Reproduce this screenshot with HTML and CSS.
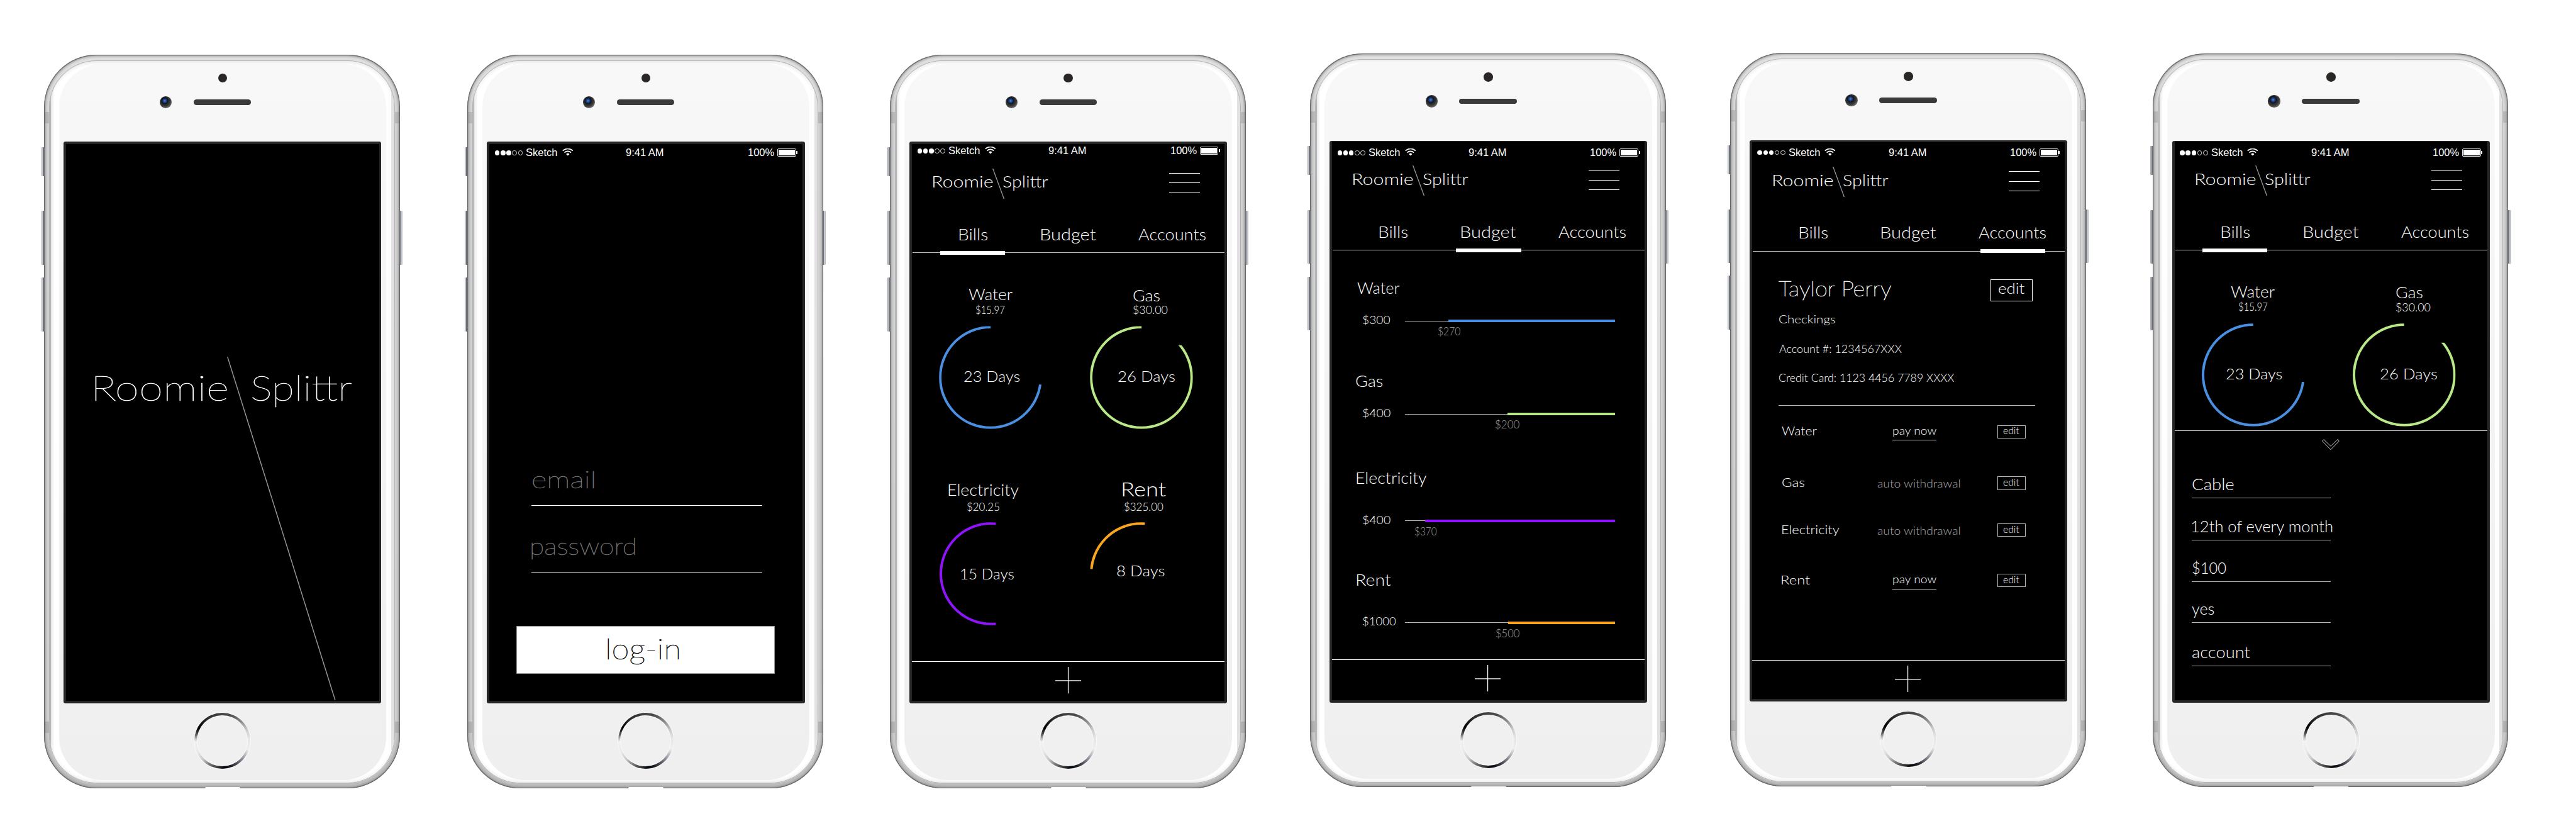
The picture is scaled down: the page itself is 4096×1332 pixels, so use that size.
FILE: index.html
```
<!DOCTYPE html>
<html lang="en">
<head>
<meta charset="utf-8">
<title>Roomie Splittr</title>
<link rel="stylesheet" href="styles.css">
</head>
<body>
<svg class="defs" width="0" height="0" aria-hidden="true">
  <symbol id="wifi" viewBox="0 0 26.6 17.3">
    <path d="M1.2 5.6a17.4 17.4 0 0 1 24.2 0M5.4 9.9a11.4 11.4 0 0 1 15.8 0" fill="none" stroke="#fff" stroke-width="2.7"/>
    <path d="M13.3 17.3L9.3 13.4a5.7 5.7 0 0 1 8 0z" fill="#fff"/>
  </symbol>
  <symbol id="slash" viewBox="0 0 29.5 73"><path d="M1 0L28 73" stroke="#979797" stroke-width="2"/></symbol>
  <symbol id="plus" viewBox="0 0 62 64"><path d="M0 33h62M31 0v64" stroke="#fff" stroke-width="2"/></symbol>
  <symbol id="ring" viewBox="0 0 247 247"><circle cx="123.5" cy="123.5" r="120.5" fill="none" stroke="currentColor" stroke-width="6"/></symbol>
</svg>
<main class="gallery">

  <section class="phone p1">
    <i class="key mute"></i><i class="key up"></i><i class="key down"></i><i class="key power"></i>
    <i class="band tl"></i><i class="band tr"></i><i class="band bl"></i><i class="band br"></i><i class="port"></i>
    <div class="glass"><div class="face">
      <div class="sensor"></div>
      <div class="ear"><div class="camera"></div><div class="speaker"></div></div>
      <div class="screen"><div class="view splash">
        <span class="t big-roomie">Roomie</span><span class="t big-splittr">Splittr</span>
        <svg class="big-slash" viewBox="0 0 262 824"><path d="M1 0L259.5 824" stroke="#979797" stroke-width="2.2"/></svg>
      </div></div>
      <div class="home"><div class="home-pad"></div></div>
    </div></div>
  </section>

  <section class="phone p2">
    <i class="key mute"></i><i class="key up"></i><i class="key down"></i><i class="key power"></i>
    <i class="band tl"></i><i class="band tr"></i><i class="band bl"></i><i class="band br"></i><i class="port"></i>
    <div class="glass"><div class="face">
      <div class="sensor"></div>
      <div class="ear"><div class="camera"></div><div class="speaker"></div></div>
      <div class="screen"><div class="view login">
        <div class="status"><span class="dots"><i></i><i></i><i></i><i class="o"></i><i class="o"></i></span><span class="carrier">Sketch</span><svg class="wifi"><use href="#wifi"/></svg><span class="clock">9:41 AM</span><span class="pct">100%</span><span class="battery"></span><i class="nub"></i></div>
        <div class="login-field email"><span class="t">email</span></div>
        <div class="login-field password"><span class="t">password</span></div>
        <div class="login-button"><span class="t">log-in</span></div>
      </div></div>
      <div class="home"><div class="home-pad"></div></div>
    </div></div>
  </section>

  <section class="phone p3">
    <i class="key mute"></i><i class="key up"></i><i class="key down"></i><i class="key power"></i>
    <i class="band tl"></i><i class="band tr"></i><i class="band bl"></i><i class="band br"></i><i class="port"></i>
    <div class="glass"><div class="face">
      <div class="sensor"></div>
      <div class="ear"><div class="camera"></div><div class="speaker"></div></div>
      <div class="screen"><div class="view">
        <div class="status"><span class="dots"><i></i><i></i><i></i><i class="o"></i><i class="o"></i></span><span class="carrier">Sketch</span><svg class="wifi"><use href="#wifi"/></svg><span class="clock">9:41 AM</span><span class="pct">100%</span><span class="battery"></span><i class="nub"></i></div>
        <header class="brand"><span class="t roomie">Roomie</span><svg class="slash"><use href="#slash"/></svg><span class="t splittr">Splittr</span><span class="menu"><i></i><i></i><i></i></span></header>
        <nav class="tabs"><a class="tab bills on"><span class="t">Bills</span></a><a class="tab budget"><span class="t">Budget</span></a><a class="tab accounts"><span class="t">Accounts</span></a></nav>
        <div class="cards">
          <div class="card water"><span class="t name">Water</span><span class="t cost">$15.97</span><div class="dial"><svg><use href="#ring"/></svg><span class="t days">23 Days</span></div></div>
          <div class="card gas"><span class="t name">Gas</span><span class="t cost">$30.00</span><div class="dial"><svg><use href="#ring"/></svg><span class="t days">26 Days</span></div></div>
          <div class="card electricity"><span class="t name">Electricity</span><span class="t cost">$20.25</span><div class="dial"><svg><use href="#ring"/></svg><span class="t days">15 Days</span></div></div>
          <div class="card rent"><span class="t name">Rent</span><span class="t cost">$325.00</span><div class="dial"><svg><use href="#ring"/></svg><span class="t days">8 Days</span></div></div>
        </div>
        <footer class="add"><svg><use href="#plus"/></svg></footer>
      </div></div>
      <div class="home"><div class="home-pad"></div></div>
    </div></div>
  </section>

  <section class="phone p4">
    <i class="key mute"></i><i class="key up"></i><i class="key down"></i><i class="key power"></i>
    <i class="band tl"></i><i class="band tr"></i><i class="band bl"></i><i class="band br"></i><i class="port"></i>
    <div class="glass"><div class="face">
      <div class="sensor"></div>
      <div class="ear"><div class="camera"></div><div class="speaker"></div></div>
      <div class="screen"><div class="view">
        <div class="status"><span class="dots"><i></i><i></i><i></i><i class="o"></i><i class="o"></i></span><span class="carrier">Sketch</span><svg class="wifi"><use href="#wifi"/></svg><span class="clock">9:41 AM</span><span class="pct">100%</span><span class="battery"></span><i class="nub"></i></div>
        <header class="brand"><span class="t roomie">Roomie</span><svg class="slash"><use href="#slash"/></svg><span class="t splittr">Splittr</span><span class="menu"><i></i><i></i><i></i></span></header>
        <nav class="tabs"><a class="tab bills"><span class="t">Bills</span></a><a class="tab budget on"><span class="t">Budget</span></a><a class="tab accounts"><span class="t">Accounts</span></a></nav>
        <div class="plan water"><span class="t name">Water</span><div class="line"><span class="t limit">$300</span><div class="track"><div class="left" style="width:79.5%"></div></div></div><span class="t used">$270</span></div>
        <div class="plan gas"><span class="t name">Gas</span><div class="line"><span class="t limit">$400</span><div class="track"><div class="left" style="width:51.3%"></div></div></div><span class="t used">$200</span></div>
        <div class="plan electricity"><span class="t name">Electricity</span><div class="line"><span class="t limit">$400</span><div class="track"><div class="left" style="width:90.6%"></div></div></div><span class="t used">$370</span></div>
        <div class="plan rent"><span class="t name">Rent</span><div class="line"><span class="t limit">$1000</span><div class="track"><div class="left" style="width:51%"></div></div></div><span class="t used">$500</span></div>
        <footer class="add"><svg><use href="#plus"/></svg></footer>
      </div></div>
      <div class="home"><div class="home-pad"></div></div>
    </div></div>
  </section>

  <section class="phone p5">
    <i class="key mute"></i><i class="key up"></i><i class="key down"></i><i class="key power"></i>
    <i class="band tl"></i><i class="band tr"></i><i class="band bl"></i><i class="band br"></i><i class="port"></i>
    <div class="glass"><div class="face">
      <div class="sensor"></div>
      <div class="ear"><div class="camera"></div><div class="speaker"></div></div>
      <div class="screen"><div class="view">
        <div class="status"><span class="dots"><i></i><i></i><i></i><i class="o"></i><i class="o"></i></span><span class="carrier">Sketch</span><svg class="wifi"><use href="#wifi"/></svg><span class="clock">9:41 AM</span><span class="pct">100%</span><span class="battery"></span><i class="nub"></i></div>
        <header class="brand"><span class="t roomie">Roomie</span><svg class="slash"><use href="#slash"/></svg><span class="t splittr">Splittr</span><span class="menu"><i></i><i></i><i></i></span></header>
        <nav class="tabs"><a class="tab bills"><span class="t">Bills</span></a><a class="tab budget"><span class="t">Budget</span></a><a class="tab accounts on"><span class="t">Accounts</span></a></nav>
        <div class="profile">
          <div class="owner"><span class="t owner-name">Taylor Perry</span><div class="edit-main"><span class="t">edit</span></div></div>
          <span class="t detail kind">Checkings</span>
          <span class="t detail number">Account #: 1234567XXX</span>
          <span class="t detail credit">Credit Card: 1123 4456 7789 XXXX</span>
        </div>
        <div class="pay water"><span class="t label">Water</span><span class="t now">pay now</span><div class="edit"><span class="t">edit</span></div></div>
        <div class="pay gas"><span class="t label">Gas</span><span class="t auto">auto withdrawal</span><div class="edit"><span class="t">edit</span></div></div>
        <div class="pay electricity"><span class="t label">Electricity</span><span class="t auto">auto withdrawal</span><div class="edit"><span class="t">edit</span></div></div>
        <div class="pay rent"><span class="t label">Rent</span><span class="t now">pay now</span><div class="edit"><span class="t">edit</span></div></div>
        <footer class="add"><svg><use href="#plus"/></svg></footer>
      </div></div>
      <div class="home"><div class="home-pad"></div></div>
    </div></div>
  </section>

  <section class="phone p6">
    <i class="key mute"></i><i class="key up"></i><i class="key down"></i><i class="key power"></i>
    <i class="band tl"></i><i class="band tr"></i><i class="band bl"></i><i class="band br"></i><i class="port"></i>
    <div class="glass"><div class="face">
      <div class="sensor"></div>
      <div class="ear"><div class="camera"></div><div class="speaker"></div></div>
      <div class="screen"><div class="view">
        <div class="status"><span class="dots"><i></i><i></i><i></i><i class="o"></i><i class="o"></i></span><span class="carrier">Sketch</span><svg class="wifi"><use href="#wifi"/></svg><span class="clock">9:41 AM</span><span class="pct">100%</span><span class="battery"></span><i class="nub"></i></div>
        <header class="brand"><span class="t roomie">Roomie</span><svg class="slash"><use href="#slash"/></svg><span class="t splittr">Splittr</span><span class="menu"><i></i><i></i><i></i></span></header>
        <nav class="tabs"><a class="tab bills on"><span class="t">Bills</span></a><a class="tab budget"><span class="t">Budget</span></a><a class="tab accounts"><span class="t">Accounts</span></a></nav>
        <div class="cards">
          <div class="card water"><span class="t name">Water</span><span class="t cost">$15.97</span><div class="dial"><svg><use href="#ring"/></svg><span class="t days">23 Days</span></div></div>
          <div class="card gas"><span class="t name">Gas</span><span class="t cost">$30.00</span><div class="dial"><svg><use href="#ring"/></svg><span class="t days">26 Days</span></div></div>
        </div>
        <div class="sheet">
          <svg class="chevron" viewBox="0 0 42 26"><path d="M4.4 .8L21 17 37.6 .8 41.2 4.6 21 25.2 .8 4.6z" fill="none" stroke="#fff" stroke-width="1.2"/></svg>
          <div class="entry f-name"><span class="t">Cable</span></div>
          <div class="entry f-date"><span class="t">12th of every month</span></div>
          <div class="entry f-cost"><span class="t">$100</span></div>
          <div class="entry f-auto"><span class="t">yes</span></div>
          <div class="entry f-from"><span class="t">account</span></div>
        </div>
      </div></div>
      <div class="home"><div class="home-pad"></div></div>
    </div></div>
  </section>

</main>
</body>
</html>
```
FILE: styles.css
```
/* 1rem is 100 design pixels */
html { font-size: 66.32px; }
* { box-sizing: border-box; }
body { margin: 0; background: #fff; font-family: Lato, "Open Sans", sans-serif; font-weight: 300; overflow: hidden; }
i { font-style: normal; display: block; }
svg { display: block; flex: none; }
.defs { position: absolute; }

.gallery { display: flex; align-items: flex-start; height: 1332px; padding-left: 1.06rem; }

/* light, wide text */
.t {
  display: block; flex: none; width: max-content; white-space: nowrap;
  line-height: 1.2; color: #fff;
  transform: scaleX(var(--k, 1)); transform-origin: 0 0;
}

/* display sizes use the hairline cut, slightly thickened */
.splash .t, .login .t, .owner-name { font-weight: 100; -webkit-text-stroke: .6px currentColor; }

/* device */
.phone {
  position: relative; flex: none; display: flex;
  width: 8.53rem; height: 17.583rem; margin-top: 1.307rem;
  padding: .14rem .12rem .11rem; border-radius: 1.26rem;
  background: linear-gradient(#e2e2e2, #d2d2d2 10%, #cfcfcf 90%, #bdbdbd);
  box-shadow: inset 0 0 1px 1px #5f5f5f, inset 0 0 4px 2px #8d8d8d;
}
.p2 { margin-left: 1.62rem; }
.p3 { margin-left: 1.6rem; }
.p4 { margin-left: 1.54rem; margin-top: 1.284rem; }
.p5 { margin-left: 1.54rem; margin-top: 1.265rem; }
.p6 { margin-left: 1.6rem; margin-top: 1.284rem; }
.glass {
  flex: 1; display: flex; padding: .09rem .21rem .09rem .23rem; border-radius: 1.13rem;
  background: linear-gradient(90deg, #abacaf 0, #abacaf .04rem, #eeeff0 .055rem, #f6f6f7 .1rem, #fff .12rem, #fff calc(100% - .09rem), #e2e2e2 calc(100% - .085rem), #e0e0e0);
  box-shadow: inset 0 0 0 1px #b4b4b6, inset 0 5px 6px -2px #e4e4e4, inset 0 -5px 5px -1px #efefef;
}
.face {
  flex: 1; display: flex; flex-direction: column; align-items: center;
  border-radius: 1.03rem; background: linear-gradient(#f8f8f8, #f3f3f3 50%, #efefef);
}
.key { position: absolute; width: .07rem; height: 1.29rem; left: -.06rem; border-radius: .02rem 0 0 .02rem; background: linear-gradient(90deg, #8d9098, #c9ccd5 25%, #c9ccd5 45%, #6f7179 50%); }
.mute { top: 2.22rem; height: .69rem; }
.up { top: 3.75rem; }
.down { top: 5.346rem; }
.power { top: 3.75rem; left: auto; right: -.06rem; transform: scaleX(-1); }
.band { position: absolute; width: .11rem; height: .27rem; background: rgba(120, 120, 120, .28); }
.tl, .bl { left: .01rem; }
.tr, .br { right: .01rem; }
.tl, .tr { top: 1.38rem; }
.bl, .br { bottom: 1.32rem; }
.port { position: absolute; left: 3.86rem; bottom: 0; width: .84rem; height: .02rem; background: #fff; border-radius: .4rem .4rem 0 0; }
.sensor { width: .22rem; height: .22rem; margin-top: .223rem; border-radius: 50%; background: #2b2626; flex: none; }
.ear { display: flex; align-items: center; align-self: flex-start; height: .29rem; margin: .327rem 0 0 2.418rem; }
.camera { width: .29rem; height: .29rem; border-radius: 50%; background: radial-gradient(circle at 42% 38%, #4d8fd8 0, #1f4688 14%, #14264f 25%, #0c1020 30%, #2c2c2c 38%, #333 50%, #777 78%); }
.speaker { width: 1.38rem; height: .13rem; margin-left: .522rem; border-radius: .065rem; background: #3a3a3a; }
.screen { width: 7.62rem; height: 13.46rem; margin-top: .803rem; flex: none; display: flex; padding: .05rem .06rem .06rem; border-radius: .05rem; background: #262626; }
.p4 .screen, .p6 .screen { padding-top: .01rem; padding-bottom: .05rem; }
.home {
  width: 1.34rem; height: 1.34rem; margin-top: .23rem; padding: .075rem; border-radius: 50%; flex: none;
  background: conic-gradient(#454545 0, #4c4c4c 18deg, #858585 42deg, #c9ccca 66deg, #e3e7e5 85deg, #eeeef1 108deg, #a3a1ab 128deg, #4d4c58 148deg, #1a1b22 163deg, #00060a 175deg, #2c2c2c 186deg, #757575 208deg, #c8c9c9 226deg, #e8ebea 245deg, #f0f3f2 268deg, #c4c5c5 274deg, #555 284deg, #000 298deg, #101010 308deg, #2c2c2c 325deg, #454545);
  box-shadow: 0 0 0 1px #f8f8f8;
}
.home-pad { height: 100%; border-radius: 50%; background: #f0f0f0; box-shadow: 0 0 0 1px #f8f8f8; }
.view { position: relative; flex: 1; display: flex; flex-direction: column; background: #000; overflow: hidden; }

/* splash */
.splash { flex-direction: row; align-items: flex-start; padding: 5.32rem 0 0 .585rem; font-size: .85rem; }
.big-roomie { --k: 1.229; width: 2.754rem; }
.big-splittr { --k: 1.169; margin-left: 1.079rem; }
.big-slash { position: absolute; left: 3.863rem; top: 5.095rem; width: 2.62rem; height: 8.24rem; }

/* status bar */
.status { display: flex; align-items: flex-start; flex: none; height: .5rem; padding: .07rem 0 0 .13rem; font: 400 .24rem/.214rem "Liberation Sans", Arial, sans-serif; color: #fff; white-space: nowrap; }
.p2 .status { padding-top: .116rem; }
.p4 .status, .p6 .status { padding-top: .18rem; }
.p5 .status { padding-top: .156rem; }
.dots { display: flex; gap: .025rem; padding-top: .04rem; }
.dots i { width: .114rem; height: .114rem; border-radius: 50%; background: #fff; }
.dots .o { background: none; border: 1px solid #ddd; }
.carrier, .clock, .pct { flex: none; transform: scaleX(1.038); transform-origin: 0 0; }
.carrier { width: .734rem; margin-left: .077rem; }
.wifi { width: .266rem; height: .173rem; margin-left: .136rem; }
.clock { width: .894rem; margin-left: 1.264rem; }
.pct { width: .614rem; margin-left: 2.021rem; }
.battery { width: .45rem; height: .19rem; margin-left: .094rem; border: 1px solid #e0e0e0; border-radius: 2px; padding: 1px; background: #fff content-box; }
.nub { width: .03rem; height: .08rem; margin: .055rem 0 0 .007rem; background: #fff; }

/* login */
.login-field { width: 5.534rem; margin-left: 1rem; border-bottom: 1.33px solid #fff; font-size: .56rem; flex: none; }
.login-field .t { color: #757575; }
.email { height: .97rem; margin-top: 7.211rem; }
.email .t { --k: 1.267; }
.password { height: .983rem; margin-top: .62rem; }
.password .t { --k: 1.151; margin-left: -.033rem; }
.login-button { width: 6.196rem; height: 1.138rem; margin: 1.277rem 0 0 .649rem; padding: .119rem 0 0 2.112rem; background: #fff; border: 1px solid #979797; font-size: .68rem; flex: none; }
.login-button .t { --k: 1.128; color: #000; }

/* header */
.brand { display: flex; align-items: flex-start; flex: none; height: .9rem; padding-left: .472rem; font-size: .38rem; }
.roomie { --k: 1.208; margin-top: .175rem; }
.splittr { --k: 1.139; margin: .175rem 0 0 -.055rem; }
.slash { width: .295rem; height: .73rem; margin: .087rem 0 0 .227rem; }
.menu { display: flex; flex-direction: column; gap: calc(.23rem - 1px); width: .74rem; margin: .2rem 0 0 3.029rem; }
.menu i { height: 1px; background: #fff; }
.tabs { display: flex; flex: none; height: 1.26rem; padding: .545rem 0 0 .673rem; font-size: .37rem; background: linear-gradient(#c4c4c4, #c4c4c4) .02rem calc(100% - .04rem) / 100% 1px no-repeat; }
.tab { width: 1.555rem; border-bottom: .1rem solid transparent; }
.tab.on { border-color: #fff; }
.bills .t { --k: 1.149; margin-left: .427rem; }
.budget { margin-left: .75rem; }
.budget .t { --k: 1.184; margin-left: .085rem; }
.accounts { margin-left: .94rem; }
.accounts .t { --k: 1.107; margin-left: -.04rem; }

/* bill dials */
.cards { display: grid; grid-template-columns: 3.76rem 3.74rem; grid-auto-rows: 4.18rem 4.7rem; flex: none; }
.name { font-size: .37rem; }
.cost { font-size: .25rem; }
.days { font-size: .36rem; }
.dial { display: grid; width: 2.47rem; height: 2.47rem; }
.dial svg { grid-area: 1 / 1; width: 2.47rem; height: 2.47rem; }
.dial .t { grid-area: 1 / 1; }
.water .dial { color: #4a90e2; margin: .225rem 0 0 .651rem; }
.water .dial svg { clip-path: polygon(0 0, 50% 0, 50% 56.7%, 100% 56.7%, 100% 100%, 0 100%); }
.card.water { padding-top: .725rem; }
.card.water .name { --k: 1.072; margin-left: 1.355rem; }
.card.water .cost { --k: .901; margin: .014rem 0 0 1.526rem; }
.card.water .days { --k: 1.06; margin: .987rem 0 0 .581rem; }
.card.gas { padding-top: .745rem; }
.card.gas .name { --k: 1.095; margin-left: 1.538rem; }
.card.gas .cost { --k: 1.074; margin: .004rem 0 0 1.537rem; }
.gas .dial { color: #b8e986; margin: .215rem 0 0 .51rem; }
.gas .dial svg { clip-path: polygon(0 0, 50% 0, 50% 18.6%, 100% 18.6%, 100% 100%, 0 100%); }
.card.gas .days { --k: 1.08; margin: .987rem 0 0 .657rem; }
.card.electricity { padding-top: 1.233rem; }
.card.electricity .name { --k: 1.095; margin-left: .842rem; }
.card.electricity .cost { --k: 1.02; margin: .056rem 0 0 1.314rem; }
.electricity .dial { color: #9013fe; margin: .198rem 0 0 .66rem; }
.electricity .dial svg { clip-path: inset(0 45.3% 0 0); }
.card.electricity .days { --k: 1.018; margin: 1.02rem 0 0 .484rem; }
.card.rent { padding-top: 1.156rem; }
.card.rent .name { --k: 1.195; font-size: .46rem; margin-left: 1.249rem; }
.card.rent .cost { --k: 1.019; margin: .025rem 0 0 1.325rem; }
.rent .dial { color: #f9a61f; margin: .198rem 0 0 .51rem; }
.rent .dial svg { clip-path: inset(0 46.8% 54.7% 0); }
.card.rent .days { --k: 1.087; margin: .95rem 0 0 .628rem; }

.add { margin-top: auto; flex: none; height: .945rem; border-top: 1.33px solid #fff; padding: .12rem 0 0 3.43rem; }
.p4 .add { height: .985rem; }
.add svg { width: .62rem; height: .64rem; }

/* budget */
.plan { flex: none; }
.line { display: flex; height: .324rem; padding-left: .724rem; }
.limit { --k: 1.09; width: .626rem; font-size: .27rem; }
.plan.water .limit { --k: 1.075; }
.plan.rent .limit { --k: 1.039; }
.track { display: flex; justify-content: flex-end; width: 5.03rem; height: .06rem; margin: .155rem 0 0 .408rem; background: linear-gradient(#b8b8b8, #b8b8b8) 0 50% / 100% 1px no-repeat; }
.plan.rent .limit { width: .626rem; }
.left { background: #4a90e2; }
.used { font-size: .25rem; color: #a0a0a0; margin-top: -.02rem; }
.plan.water .name { --k: 1.036; margin: .637rem 0 .386rem .6rem; }
.plan.water .used { --k: .947; margin-left: 2.542rem; }
.plan.gas .name { --k: 1.103; margin: .79rem 0 .387rem .556rem; }
.plan.gas .left { background: #b8e986; }
.plan.gas .used { --k: 1.021; margin-left: 3.914rem; }
.plan.electricity .name { --k: 1.091; margin: .894rem 0 .62rem .567rem; }
.plan.electricity .left { background: #9013fe; }
.plan.electricity .used { --k: .927; margin-left: 1.978rem; }
.plan.rent .name { --k: 1.169; margin: .767rem 0 .625rem .564rem; }
.plan.rent .left { background: #f9a61f; }
.plan.rent .used { --k: 1.001; margin-left: 3.919rem; }

/* accounts */
.profile { flex: none; width: 6.16rem; height: 3.66rem; margin-left: .632rem; border-bottom: 1px solid #b8b8b8; padding-top: .533rem; }
.owner { display: flex; align-items: flex-start; height: .617rem; }
.owner-name { --k: 1.065; width: 2.61rem; font-size: .51rem; }
.edit-main { width: 1.003rem; height: .522rem; margin: .097rem 0 0 2.477rem; border: 1.33px solid #fff; padding-left: .165rem; font-size: .36rem; }
.edit-main .t { --k: 1.083; margin-top: -.015rem; }
.detail { font-size: .26rem; }
.kind { --k: 1.195; margin-top: .29rem; }
.number { --k: 1.042; margin: .396rem 0 0 .02rem; }
.credit { --k: 1.031; margin-top: .379rem; }
.pay { display: grid; grid-template-columns: 2.28rem 2.883rem .675rem; align-items: start; flex: none; height: .4rem; margin-left: .72rem; }
.label { --k: 1.1; font-size: .3rem; }
.pay.water { margin-top: .425rem; }
.pay.water .label { --k: 1.055; }
.pay.gas { margin-top: .83rem; }
.pay.gas .label { --k: 1.131; margin-left: -.014rem; }
.pay.electricity { margin-top: .727rem; }
.pay.electricity .label { margin-left: -.016rem; }
.pay.rent { margin-top: .807rem; }
.pay.rent .label { --k: 1.199; margin-left: -.03rem; }
.now { --k: 1.077; font-size: .27rem; margin: .006rem 0 0 .368rem; padding-bottom: .065rem; border-bottom: 1px solid #c8c8c8; }
.auto { --k: 1.075; font-size: .27rem; margin: .047rem 0 0 .003rem; color: #a8a8a8; }
.edit { width: .675rem; height: .325rem; margin-top: .035rem; border: 1px solid #b8b8b8; padding-left: .12rem; font-size: .22rem; }
.edit .t { --k: 1.079; margin-top: -.005rem; }

/* new bill sheet */
.sheet { flex: none; margin-top: .092rem; border-top: 1px solid #c4c4c4; }
.chevron { width: .42rem; height: .26rem; margin: .192rem 0 0 3.54rem; }
.entry { width: 3.344rem; height: .56rem; margin-left: .409rem; border-bottom: 1px solid #b8b8b8; font-size: .37rem; }
.f-name { margin-top: .602rem; }
.f-name .t { --k: 1.126; }
.f-date { margin-top: .45rem; }
.f-date .t { --k: 1.042; margin-left: -.02rem; }
.f-cost { margin-top: .43rem; }
.f-cost .t { --k: .965; }
.f-auto { margin-top: .428rem; }
.f-auto .t { --k: 1.031; }
.f-from { margin-top: .472rem; }
.f-from .t { --k: 1.113; }
```
